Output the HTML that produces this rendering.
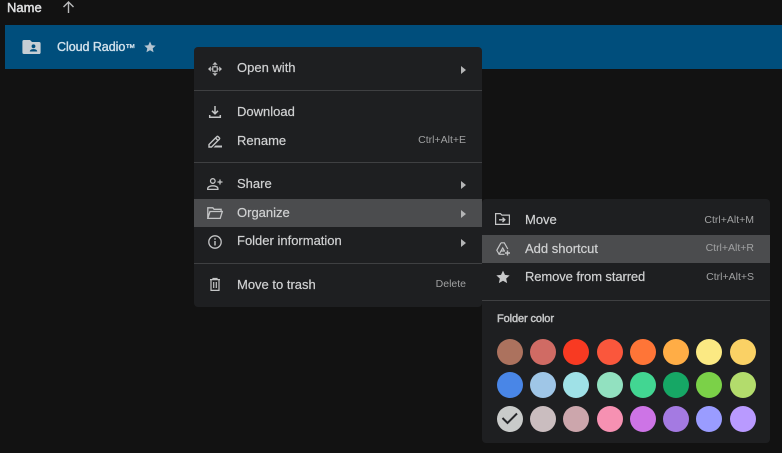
<!DOCTYPE html>
<html><head><meta charset="utf-8">
<style>
html,body{margin:0;padding:0;background:#121212;}
body{position:relative;width:782px;height:453px;overflow:hidden;font-family:"Liberation Sans",sans-serif;}
.a{position:absolute;}
.t{position:absolute;font-size:13px;line-height:16px;color:#d0d1d2;white-space:nowrap;-webkit-text-stroke:.2px #d0d1d2;}
.s{position:absolute;font-size:10.5px;line-height:14px;color:#a0a1a2;white-space:nowrap;text-align:right;}
.menu{position:absolute;background:#1e1f21;border-radius:4px;}
.d{position:absolute;height:1px;background:#3f4042;}
.h{position:absolute;height:28px;background:#4b4c4e;}
.c{position:absolute;width:26px;height:26px;border-radius:50%;}
.ar{position:absolute;width:0;height:0;border-left:5px solid #b4b5b6;border-top:4.5px solid transparent;border-bottom:4.5px solid transparent;}
svg{position:absolute;overflow:visible;}
</style></head><body>
<div class="t" style="left:7px;top:0;font-size:13px;color:#dfe0e1;-webkit-text-stroke:.45px #dfe0e1;">Name</div>
<svg style="left:62px;top:1px" width="13" height="12" viewBox="0 0 13 12" fill="none" stroke="#b9babb" stroke-width="1.400"><path d="M6.500 12V1M1.500 6L6.500 1l5 5"/></svg>

<div class="a" style="left:5px;top:25px;width:777px;height:44px;background:#004e7c;"></div>
<svg style="left:22px;top:39px" width="19" height="16" viewBox="0 0 19 16"><path fill="#c6ced4" d="M2 1h6l2 2h7a1.600 1.600 0 0 1 1.600 1.600v9A1.600 1.600 0 0 1 17 15H2a1.600 1.600 0 0 1-1.600-1.600V2.600A1.600 1.600 0 0 1 2 1z"/><circle cx="11.500" cy="7.300" r="1.900" fill="#004e7c"/><path fill="#004e7c" d="M7.800 12.500c0-1.700 2-2.400 3.700-2.400s3.700.7 3.700 2.400z"/></svg>
<div class="t" style="left:57px;top:39px;color:#d3e2ec;-webkit-text-stroke:.35px #d3e2ec;font-size:12.5px;letter-spacing:-.05px;">Cloud Radio<span style="font-size:10px;">™</span></div>
<svg style="left:144px;top:41px" width="12" height="12" viewBox="0 0 24 24"><path fill="#b4c4d0" d="M12 1l3.400 7.400 8 .9-6 5.400 1.700 7.900L12 18.500l-7.100 4.100 1.700-7.900-6-5.400 8-.9z"/></svg>

<div class="menu" style="left:194px;top:47px;width:288px;height:260px;"></div>
<div class="h" style="left:194px;top:199px;width:288px;"></div>
<div class="d" style="left:194px;top:90px;width:288px;"></div>
<div class="d" style="left:194px;top:162px;width:288px;"></div>
<div class="d" style="left:194px;top:263px;width:288px;"></div>

<svg style="left:208px;top:62px" width="14" height="14" viewBox="0 0 14 14"><path fill="#c0c1c2" d="M7 0l2.600 2.800H4.400zM7 14l-2.600-2.800h5.200zM0 7l2.800-2.600v5.200zM14 7l-2.800 2.600V4.400z"/><path fill="none" stroke="#c0c1c2" stroke-width="1.500" d="M7 3.500v1.500M7 9v1.500M3.500 7h1.500M9 7h1.500"/><path fill="none" stroke="#c0c1c2" stroke-width="1.100" d="M4.800 4.800h4.400v4.400H4.800z"/></svg>
<div class="t" style="left:237px;top:60px;">Open with</div>
<div class="ar" style="left:461px;top:66px;"></div>

<svg style="left:209px;top:106px" width="12" height="12" viewBox="0 0 12 12" fill="none" stroke="#c4c5c6" stroke-width="1.500"><path d="M6 0v7.500M3 4.800L6 7.800l3-3M.7 9v2.300h10.600V9"/></svg>
<div class="t" style="left:237px;top:104px;">Download</div>

<svg style="left:208px;top:135px" width="14" height="13" viewBox="0 0 14 13"><path fill="none" stroke="#c4c5c6" stroke-width="1.400" d="M1 9.500V12h2.500L10 5.500 7.500 3zM7.500 3l1.300-1.300a1 1 0 0 1 1.400 0l1.100 1.100a1 1 0 0 1 0 1.400L10 5.500"/><path fill="#c4c5c6" d="M7.500 10.500H14V12.500H5.500z"/></svg>
<div class="t" style="left:237px;top:133px;">Rename</div>
<div class="s" style="right:316px;top:133px;">Ctrl+Alt+E</div>

<svg style="left:207px;top:178px" width="16" height="12" viewBox="0 0 16 12" fill="none" stroke="#c4c5c6" stroke-width="1.300"><circle cx="5.800" cy="3" r="2.300"/><path d="M.7 11.400v-.9c0-1.800 2.800-2.700 5.100-2.700s5.100.9 5.100 2.700v.9zM13 1.500v5M10.500 4h5"/></svg>
<div class="t" style="left:237px;top:176px;">Share</div>
<div class="ar" style="left:461px;top:181px;"></div>

<svg style="left:207px;top:207px" width="16" height="12" viewBox="0 0 16 12" fill="none" stroke="#c4c5c6" stroke-width="1.300"><path d="M.8 11.400V.8h5l1.300 1.500h7v2M.8 11.400h12.400L15.300 4.500H3z"/></svg>
<div class="t" style="left:237px;top:205px;">Organize</div>
<div class="ar" style="left:461px;top:210px;"></div>

<svg style="left:208px;top:235px" width="14" height="14" viewBox="0 0 14 14"><circle cx="7" cy="7" r="6.200" fill="none" stroke="#c4c5c6" stroke-width="1.300"/><path fill="#c4c5c6" d="M6.300 6h1.400v4.500H6.300zM6.300 3.300h1.400v1.400H6.300z"/></svg>
<div class="t" style="left:237px;top:233px;">Folder information</div>
<div class="ar" style="left:461px;top:239px;"></div>

<svg style="left:210px;top:278px" width="10" height="13" viewBox="0 0 10 13" fill="none" stroke="#c4c5c6" stroke-width="1.200"><path d="M0 1.600h10M3 1.600V.5h4v1.100M1 1.600v10.800h8V1.600M3.700 4v6M6.300 4v6"/></svg>
<div class="t" style="left:237px;top:277px;">Move to trash</div>
<div class="s" style="right:316px;top:277px;">Delete</div>

<div class="menu" style="left:482px;top:199px;width:288px;height:244px;"></div>
<div class="h" style="left:482px;top:235px;width:288px;"></div>
<div class="d" style="left:482px;top:300px;width:288px;"></div>

<svg style="left:495px;top:213px" width="15" height="12" viewBox="0 0 15 12" fill="none" stroke="#c4c5c6" stroke-width="1.200"><path d="M.6 11.400V.6h4.800l1.500 1.500h7.500v9.300z"/><path stroke-width="1.400" d="M4 6.800h5.500M7.500 4.600l2.300 2.200-2.300 2.200"/></svg>
<div class="t" style="left:525px;top:212px;">Move</div>
<div class="s" style="right:28px;top:213px;">Ctrl+Alt+M</div>

<svg style="left:496px;top:242px" width="15" height="14" viewBox="0 0 15 14" fill="none" stroke="#c4c5c6" stroke-width="1.200"><path d="M5 .8h3.300L11.800 7M5 .8L.8 8.300l2.300 4h5.400"/><path d="M3.100 12.300L5 9h4M5 9l1.700-3 1.800 3"/><path stroke-width="1.400" d="M11.500 8.500v5M9 11h5"/></svg>
<div class="t" style="left:525px;top:241px;">Add shortcut</div>
<div class="s" style="right:28px;top:241px;">Ctrl+Alt+R</div>

<svg style="left:496px;top:270px" width="14" height="14" viewBox="0 0 24 24"><path fill="#c8c9ca" d="M12 1l3.400 7.400 8 .9-6 5.400 1.700 7.900L12 18.500l-7.100 4.100 1.700-7.900-6-5.400 8-.9z"/></svg>
<div class="t" style="left:525px;top:269px;letter-spacing:-.1px;">Remove from starred</div>
<div class="s" style="right:28px;top:270px;">Ctrl+Alt+S</div>

<div class="t" style="left:497px;top:311px;font-size:11px;letter-spacing:-.1px;color:#c4c5c6;-webkit-text-stroke:.5px #c4c5c6;">Folder color</div>

<div class="c" style="left:497px;top:339px;background:#ac725e"></div>
<div class="c" style="left:530px;top:339px;background:#d06b64"></div>
<div class="c" style="left:563px;top:339px;background:#f83a22"></div>
<div class="c" style="left:597px;top:339px;background:#fa573c"></div>
<div class="c" style="left:630px;top:339px;background:#ff7537"></div>
<div class="c" style="left:663px;top:339px;background:#ffad46"></div>
<div class="c" style="left:696px;top:339px;background:#fbe983"></div>
<div class="c" style="left:730px;top:339px;background:#fad165"></div>

<div class="c" style="left:497px;top:372px;background:#4986e7"></div>
<div class="c" style="left:530px;top:372px;background:#9fc6e7"></div>
<div class="c" style="left:563px;top:372px;background:#9fe1e7"></div>
<div class="c" style="left:597px;top:372px;background:#92e1c0"></div>
<div class="c" style="left:630px;top:372px;background:#42d692"></div>
<div class="c" style="left:663px;top:372px;background:#16a765"></div>
<div class="c" style="left:696px;top:372px;background:#7bd148"></div>
<div class="c" style="left:730px;top:372px;background:#b3dc6c"></div>

<div class="c" style="left:497px;top:406px;background:#c9cbca"></div>
<svg style="left:501px;top:412px" width="17" height="13" viewBox="0 0 17 13" fill="none" stroke="#26272a" stroke-width="2"><path d="M1.500 6l5 5L16 1.500"/></svg>
<div class="c" style="left:530px;top:406px;background:#cabdbf"></div>
<div class="c" style="left:563px;top:406px;background:#cca6ac"></div>
<div class="c" style="left:597px;top:406px;background:#f691b2"></div>
<div class="c" style="left:630px;top:406px;background:#cd74e6"></div>
<div class="c" style="left:663px;top:406px;background:#a47ae2"></div>
<div class="c" style="left:696px;top:406px;background:#9a9cff"></div>
<div class="c" style="left:730px;top:406px;background:#b99aff"></div>
</body></html>
